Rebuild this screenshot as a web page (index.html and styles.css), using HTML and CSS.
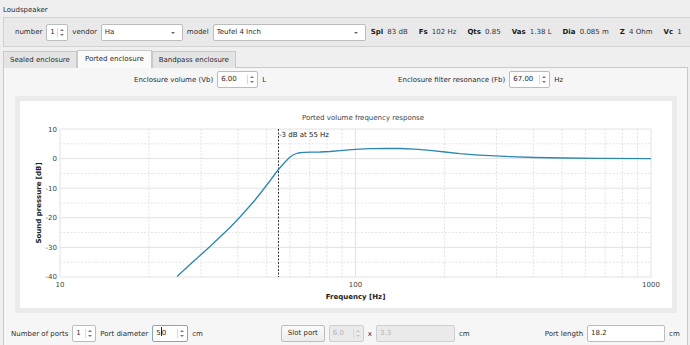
FILE: index.html
```html
<!DOCTYPE html>
<html>
<head>
  <title>Loudspeaker enclosure</title>
  <link rel="stylesheet" href="styles.css">
</head>
<body>
  <div class="app">
    <div class="group-title">Loudspeaker</div>
    <div class="group">
      <span class="lbl">number</span>
      <span class="spin w-num">1<i class="arrows"></i></span>
      <span class="lbl">vendor</span>
      <span class="combo w-vendor">Ha<i class="drop"></i></span>
      <span class="lbl">model</span>
      <span class="combo w-model">Teufel 4 Inch<i class="drop"></i></span>
      <div class="params">
        <span><b>Spl</b> 83 dB</span>
        <span><b>Fs</b> 102 Hz</span>
        <span><b>Qts</b> 0.85</span>
        <span><b>Vas</b> 1.38 L</span>
        <span><b>Dia</b> 0.085 m</span>
        <span><b>Z</b> 4 Ohm</span>
        <span><b>Vc</b> 1</span>
      </div>
    </div>

    <div class="tabs">
      <div class="tab">Sealed enclosure</div>
      <div class="tab active">Ported enclosure</div>
      <div class="tab">Bandpass enclosure</div>
    </div>

    <div class="pane">
      <div class="row-top">
        <div class="field vb">
          <span class="lbl">Enclosure volume (Vb)</span>
          <span class="spin w-vb">6.00<i class="arrows"></i></span>
          <span class="lbl">L</span>
        </div>
        <div class="field fb">
          <span class="lbl">Enclosure filter resonance (Fb)</span>
          <span class="spin w-fb">67.00<i class="arrows"></i></span>
          <span class="lbl">Hz</span>
        </div>
      </div>

      <div class="chart-frame">
        <div class="chart">
          <svg width="652" height="208" viewBox="0 0 652 208">
            <!-- minor grid -->
            <path d="M40 42.8H631M40 72.4H631M40 102H631M40 131.6H631M40 161.2H631
                     M128.9 28V176M181 28V176M217.9 28V176M246.6 28V176M269.9 28V176M289.7 28V176M306.9 28V176M322 28V176
                     M424.4 28V176M476.5 28V176M513.4 28V176M542.1 28V176M565.4 28V176M585.2 28V176M602.4 28V176M617.5 28V176"
                  stroke="#e4e4e4" stroke-width="1" stroke-dasharray="2 1.5" fill="none"/>
            <!-- major grid -->
            <path d="M40 28H631M40 57.6H631M40 87.2H631M40 116.8H631M40 146.4H631M40 176H631
                     M40 28V176M335.5 28V176M631 28V176"
                  stroke="#e2e2e2" stroke-width="1" fill="none"/>
            <!-- -3 dB marker -->
            <path d="M258.5 28V176" stroke="#333" stroke-width="1" stroke-dasharray="2 1.5"/>
            <text x="259" y="36" class="note">-3 dB at 55 Hz</text>
            <!-- response curve -->
            <polyline fill="none" stroke="#2c87b5" stroke-width="1.3" stroke-linejoin="round"
              points="157,175.5 170,163.5 180,154.5 190,145.5 200,136 210,126.5 220,116 228,107 235,99 241,91.5 246,85 251,78.5 255,73 258,69 262,64.5 266,60 270,56 274,53.5 278,52 284,51.3 292,51.2 300,51 310,50.5 320,49.7 335,48.3 350,47.6 365,47.3 380,47.5 395,48.2 410,49.4 425,51 440,52.6 455,53.8 470,54.7 490,55.7 515,56.5 545,57 580,57.4 631,57.6"/>
            <!-- axes labels -->
            <text x="343" y="19" class="title">Ported volume frequency response</text>
            <g class="ytick">
              <text x="37" y="30.5">10</text>
              <text x="37" y="60">0</text>
              <text x="37" y="89.5">-10</text>
              <text x="37" y="119">-20</text>
              <text x="37" y="148.5">-30</text>
              <text x="37" y="178">-40</text>
            </g>
            <g class="xtick">
              <text x="40" y="186">10</text>
              <text x="335.5" y="186">100</text>
              <text x="631" y="186">1000</text>
            </g>
            <text x="335.5" y="198" class="axis">Frequency [Hz]</text>
            <text x="0" y="0" class="axis" transform="translate(20.5 102) rotate(-90)">Sound pressure [dB]</text>
          </svg>
        </div>
      </div>

      <div class="row-bottom">
        <span class="lbl">Number of ports</span>
        <span class="spin w-ports">1<i class="arrows"></i></span>
        <span class="lbl">Port diameter</span>
        <span class="spin w-dia focus">5<span class="caret"></span>0<i class="arrows"></i></span>
        <span class="lbl">cm</span>
        <span class="button">Slot port</span>
        <span class="spin w-slot disabled">6.0<i class="arrows"></i></span>
        <span class="lbl">x</span>
        <span class="input w-slot2 disabled">3.3</span>
        <span class="lbl">cm</span>
        <span class="lbl len">Port length</span>
        <span class="input w-len">18.2</span>
        <span class="lbl">cm</span>
      </div>
    </div>
  </div>
</body>
</html>
```

FILE: styles.css
```css
body {
  margin: 0;
  background-color: #efefef;
  font-family: "DejaVu Sans", "Liberation Sans", sans-serif;
  font-size: 7px;
  color: #2b2b2b;
  overflow: hidden;
}

.app {
  width: 700px;
  height: 345px;
  padding-left: 3px;
}

.group-title {
  height: 17px;
  line-height: 11px;
  padding-top: 5px;
  box-sizing: border-box;
}

.group {
  display: flex;
  align-items: center;
  height: 30px;
  box-sizing: border-box;
  padding-left: 7px;
  background-color: #e9e9e9;
  border: 1px solid #d2d2d2;
  border-right: none;
}

.group > *, .row-bottom > *, .field > * {
  flex-shrink: 0;
}

.lbl {
  margin: 0 4px;
  white-space: nowrap;
}

/* spin boxes, combo boxes, line edits */
.spin, .combo, .input {
  position: relative;
  display: inline-block;
  box-sizing: border-box;
  height: 17px;
  line-height: 15px;
  padding-left: 3px;
  background-color: #fff;
  border: 1px solid #bcbcbc;
  border-radius: 2px;
  white-space: nowrap;
}
.spin.focus {
  border-color: #7ba7d0;
}
.spin.disabled, .input.disabled {
  background-color: #eaeaea;
  border-color: #cfcfcf;
  color: #b5b5b5;
}
.arrows {
  position: absolute;
  top: 3px;
  right: 3px;
  width: 5px;
  height: 9px;
  border-left: 1px solid #d8d8d8;
  padding-left: 1px;
}
.arrows::before, .arrows::after {
  content: "";
  position: absolute;
  left: 2px;
  border-left: 2px solid transparent;
  border-right: 2px solid transparent;
}
.arrows::before {
  top: 1px;
  border-bottom: 2px solid #777;
}
.arrows::after {
  bottom: 1px;
  border-top: 2px solid #777;
}
.disabled .arrows::before { border-bottom-color: #c4c4c4; }
.disabled .arrows::after { border-top-color: #c4c4c4; }

.drop {
  position: absolute;
  top: 7px;
  right: 7px;
  border-left: 2px solid transparent;
  border-right: 2px solid transparent;
  border-top: 2px solid #666;
}

.caret {
  display: inline-block;
  width: 1px;
  height: 9px;
  background-color: #222;
  vertical-align: -1px;
}

.w-num { width: 22px; }
.w-vendor { width: 82px; }
.w-model { width: 153px; }
.w-vb { width: 41px; }
.w-fb { width: 41px; }
.w-ports { width: 24px; }
.w-dia { width: 36px; }
.w-slot { width: 35px; }
.w-slot2 { width: 79px; }
.w-len { width: 78px; }

.params {
  display: flex;
  gap: 11px;
  margin-left: 5px;
  white-space: nowrap;
  color: #333;
}
.params b {
  color: #1a1a1a;
  margin-right: 2px;
}

/* tabs */
.tabs {
  display: flex;
  align-items: flex-end;
  height: 20px;
}
.tab {
  box-sizing: border-box;
  height: 17px;
  line-height: 16px;
  padding: 0 6px;
  background-color: #e4e4e4;
  border: 1px solid #c9c9c9;
  border-bottom: none;
  margin-bottom: -1px;
  white-space: nowrap;
}
.tab.active {
  height: 18px;
  padding: 0 7px;
  background-color: #fafafa;
  border-color: #c9c9c9;
  position: relative;
  z-index: 1;
}

.pane {
  width: 685px;
  height: 290px;
  box-sizing: border-box;
  background-color: #f6f6f6;
  border: 1px solid #c9c9c9;
  padding: 3px 11px 0 11px;
}

.row-top {
  display: flex;
  height: 17px;
  align-items: center;
}
.field {
  display: flex;
  align-items: center;
}
.field.vb {
  margin-left: 115px;
}
.field.fb {
  margin-left: 124px;
}

.chart-frame {
  margin-top: 8px;
  width: 662px;
  height: 217px;
  box-sizing: border-box;
  padding: 5px;
  background-color: #ebebeb;
}
.chart {
  background-color: #fff;
  height: 207px;
  overflow: hidden;
}
.chart svg {
  display: block;
}
.chart text {
  font-family: "DejaVu Sans", sans-serif;
  font-size: 7px;
}
.chart .title {
  text-anchor: middle;
  fill: #444;
}
.chart .note {
  fill: #222;
}
.ytick text {
  text-anchor: end;
  fill: #444;
}
.xtick text {
  text-anchor: middle;
  fill: #444;
}
.chart .axis {
  text-anchor: middle;
  font-weight: bold;
  fill: #222;
}

.row-bottom {
  display: flex;
  align-items: center;
  height: 17px;
  margin-top: 12px;
  margin-left: -8px;
}
.button {
  box-sizing: border-box;
  height: 17px;
  line-height: 15px;
  padding: 0 6px;
  margin: 0 4px 0 74px;
  background: linear-gradient(#fbfbfb, #ececec);
  border: 1px solid #bdbdbd;
  border-radius: 2px;
  white-space: nowrap;
}
.lbl.len {
  margin-left: 71px;
}
```
